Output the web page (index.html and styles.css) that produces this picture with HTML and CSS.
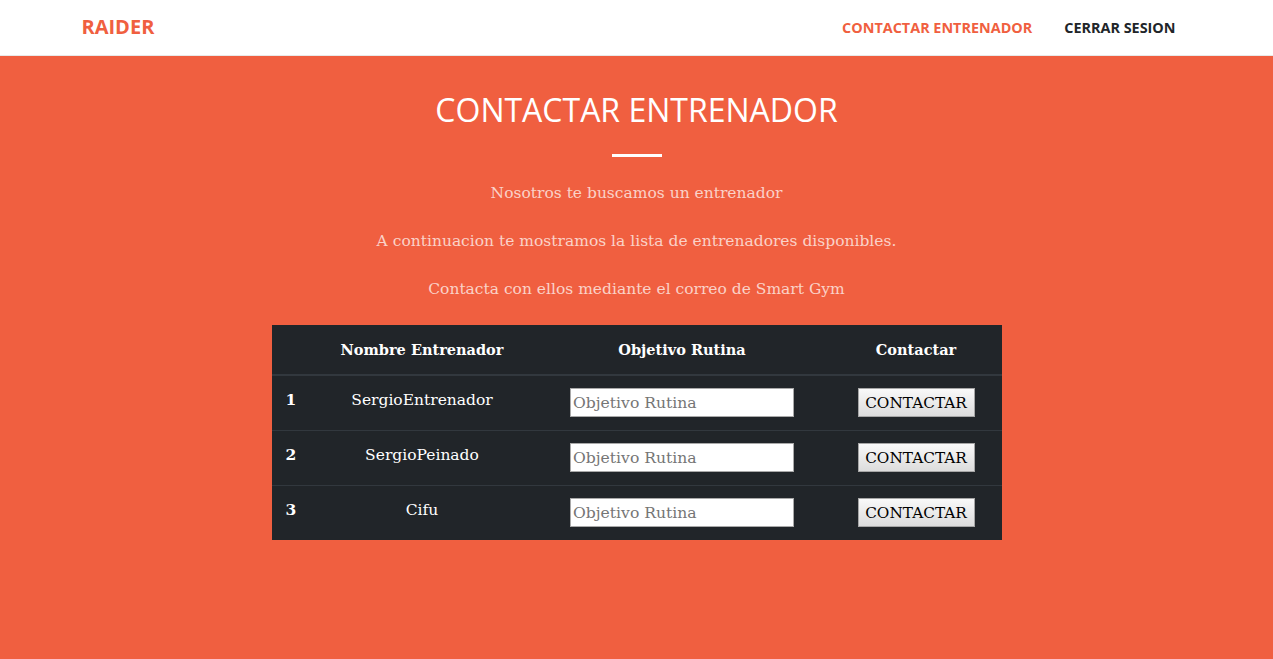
FILE: index.html
```html
<!DOCTYPE html>
<html lang="es">
<head>
<meta charset="utf-8">
<title>Raider - Contactar Entrenador</title>
<link rel="stylesheet" href="styles.css">
</head>
<body>
<nav class="navbar">
  <div class="container nav-inner">
    <a class="brand" href="#">RAIDER</a>
    <ul class="nav-links">
      <li><a class="nav-link active" href="#">CONTACTAR ENTRENADOR</a></li>
      <li><a class="nav-link" href="#">CERRAR SESION</a></li>
    </ul>
  </div>
</nav>
<section class="hero">
  <h2 class="title">CONTACTAR ENTRENADOR</h2>
  <hr class="divider">
  <p class="lead">Nosotros te buscamos un entrenador</p>
  <p class="lead">A continuacion te mostramos la lista de entrenadores disponibles.</p>
  <p class="lead">Contacta con ellos mediante el correo de Smart Gym</p>
  <table class="trainers">
    <colgroup>
      <col class="c1"><col class="c2"><col class="c3"><col class="c4">
    </colgroup>
    <thead>
      <tr><th></th><th>Nombre Entrenador</th><th>Objetivo Rutina</th><th>Contactar</th></tr>
    </thead>
    <tbody>
      <tr>
        <th class="num">1</th>
        <td class="name">SergioEntrenador</td>
        <td><input class="field" type="text" placeholder="Objetivo Rutina"></td>
        <td><button class="btn" type="button">CONTACTAR</button></td>
      </tr>
      <tr>
        <th class="num">2</th>
        <td class="name">SergioPeinado</td>
        <td><input class="field" type="text" placeholder="Objetivo Rutina"></td>
        <td><button class="btn" type="button">CONTACTAR</button></td>
      </tr>
      <tr>
        <th class="num">3</th>
        <td class="name">Cifu</td>
        <td><input class="field" type="text" placeholder="Objetivo Rutina"></td>
        <td><button class="btn" type="button">CONTACTAR</button></td>
      </tr>
    </tbody>
  </table>
</section>
</body>
</html>
```
FILE: styles.css
```css
* { box-sizing: border-box; }
html, body { margin: 0; padding: 0; height: 100%; }
body {
  font-family: "DejaVu Serif", "Liberation Serif", serif;
  font-size: 16px;
  line-height: 1.5;
  color: #212529;
  background: #f05f40;
  display: flex;
  flex-direction: column;
}
.navbar {
  background: #fff;
  height: 56px;
  border-bottom: 1px solid rgba(33,37,41,.1);
  flex: none;
}
.container {
  width: 1140px;
  margin: 0 auto;
  padding: 0 15px;
}
.nav-inner {
  height: 55px;
  display: flex;
  align-items: center;
  justify-content: space-between;
}
.brand {
  font-family: "Open Sans", sans-serif;
  font-weight: 700;
  font-size: 20px;
  color: #f05f40;
  text-decoration: none;
  margin-top: -2px;
}
.nav-links {
  list-style: none;
  margin: 0;
  padding: 0;
  display: flex;
}
.nav-link {
  display: block;
  padding: 0 16px;
  font-family: "Open Sans", sans-serif;
  font-weight: 700;
  font-size: 14.4px;
  color: #212529;
  text-decoration: none;
}
.nav-link.active { color: #f05f40; }
.hero {
  flex: 1;
  display: flex;
  flex-direction: column;
  align-items: center;
  padding-top: 35px;
  text-align: center;
}
.title {
  margin: 0;
  font-family: "Open Sans", sans-serif;
  font-weight: 400;
  font-size: 32px;
  line-height: 1.2;
  color: #fff;
}
.divider {
  width: 50px;
  height: 3px;
  border: 0;
  background: #fff;
  margin: 25px 0 24px;
}
.lead {
  margin: 0 0 24px;
  color: rgba(255,255,255,.72);
  font-size: 15.5px;
  line-height: 24px;
}
.trainers {
  width: 730px;
  table-layout: fixed;
  border-collapse: separate;
  border-spacing: 0;
  background: #212529;
  color: #fff;
  font-size: 15.5px;
}
.c1 { width: 39px; }
.c2 { width: 223px; }
.c3 { width: 297px; }
.c4 { width: 171px; }
.trainers thead th {
  padding: 13px 12px 12px;
  line-height: 24px;
  font-weight: 700;
  font-size: 14.5px;
  text-align: center;
  border-bottom: 1px solid #32383e;
}
.trainers tbody th,
.trainers tbody td {
  padding: 12px 12px 13px;
  line-height: 24px;
  vertical-align: top;
  border-top: 1px solid #32383e;
  text-align: center;
}
.trainers tbody th.num { font-weight: 700; }
.field {
  display: block;
  margin: 0 auto;
  width: 224px;
  height: 29px;
  padding: 1px 2px;
  border: 1px solid #a9a9a9;
  border-radius: 0;
  background: #fff;
  font-family: "DejaVu Serif", serif;
  font-size: 15.6px;
  color: #212529;
  outline: none;
}
.field::placeholder { color: #757575; }
.btn {
  display: block;
  margin: 0 auto;
  height: 29px;
  width: 117px;
  padding: 1px 6px;
  border: 1px solid #a6a6a6;
  border-radius: 0;
  background: linear-gradient(#f9f9f9, #dcdcdc);
  font-family: "DejaVu Serif", serif;
  font-size: 15.3px;
  color: #000;
}
```
